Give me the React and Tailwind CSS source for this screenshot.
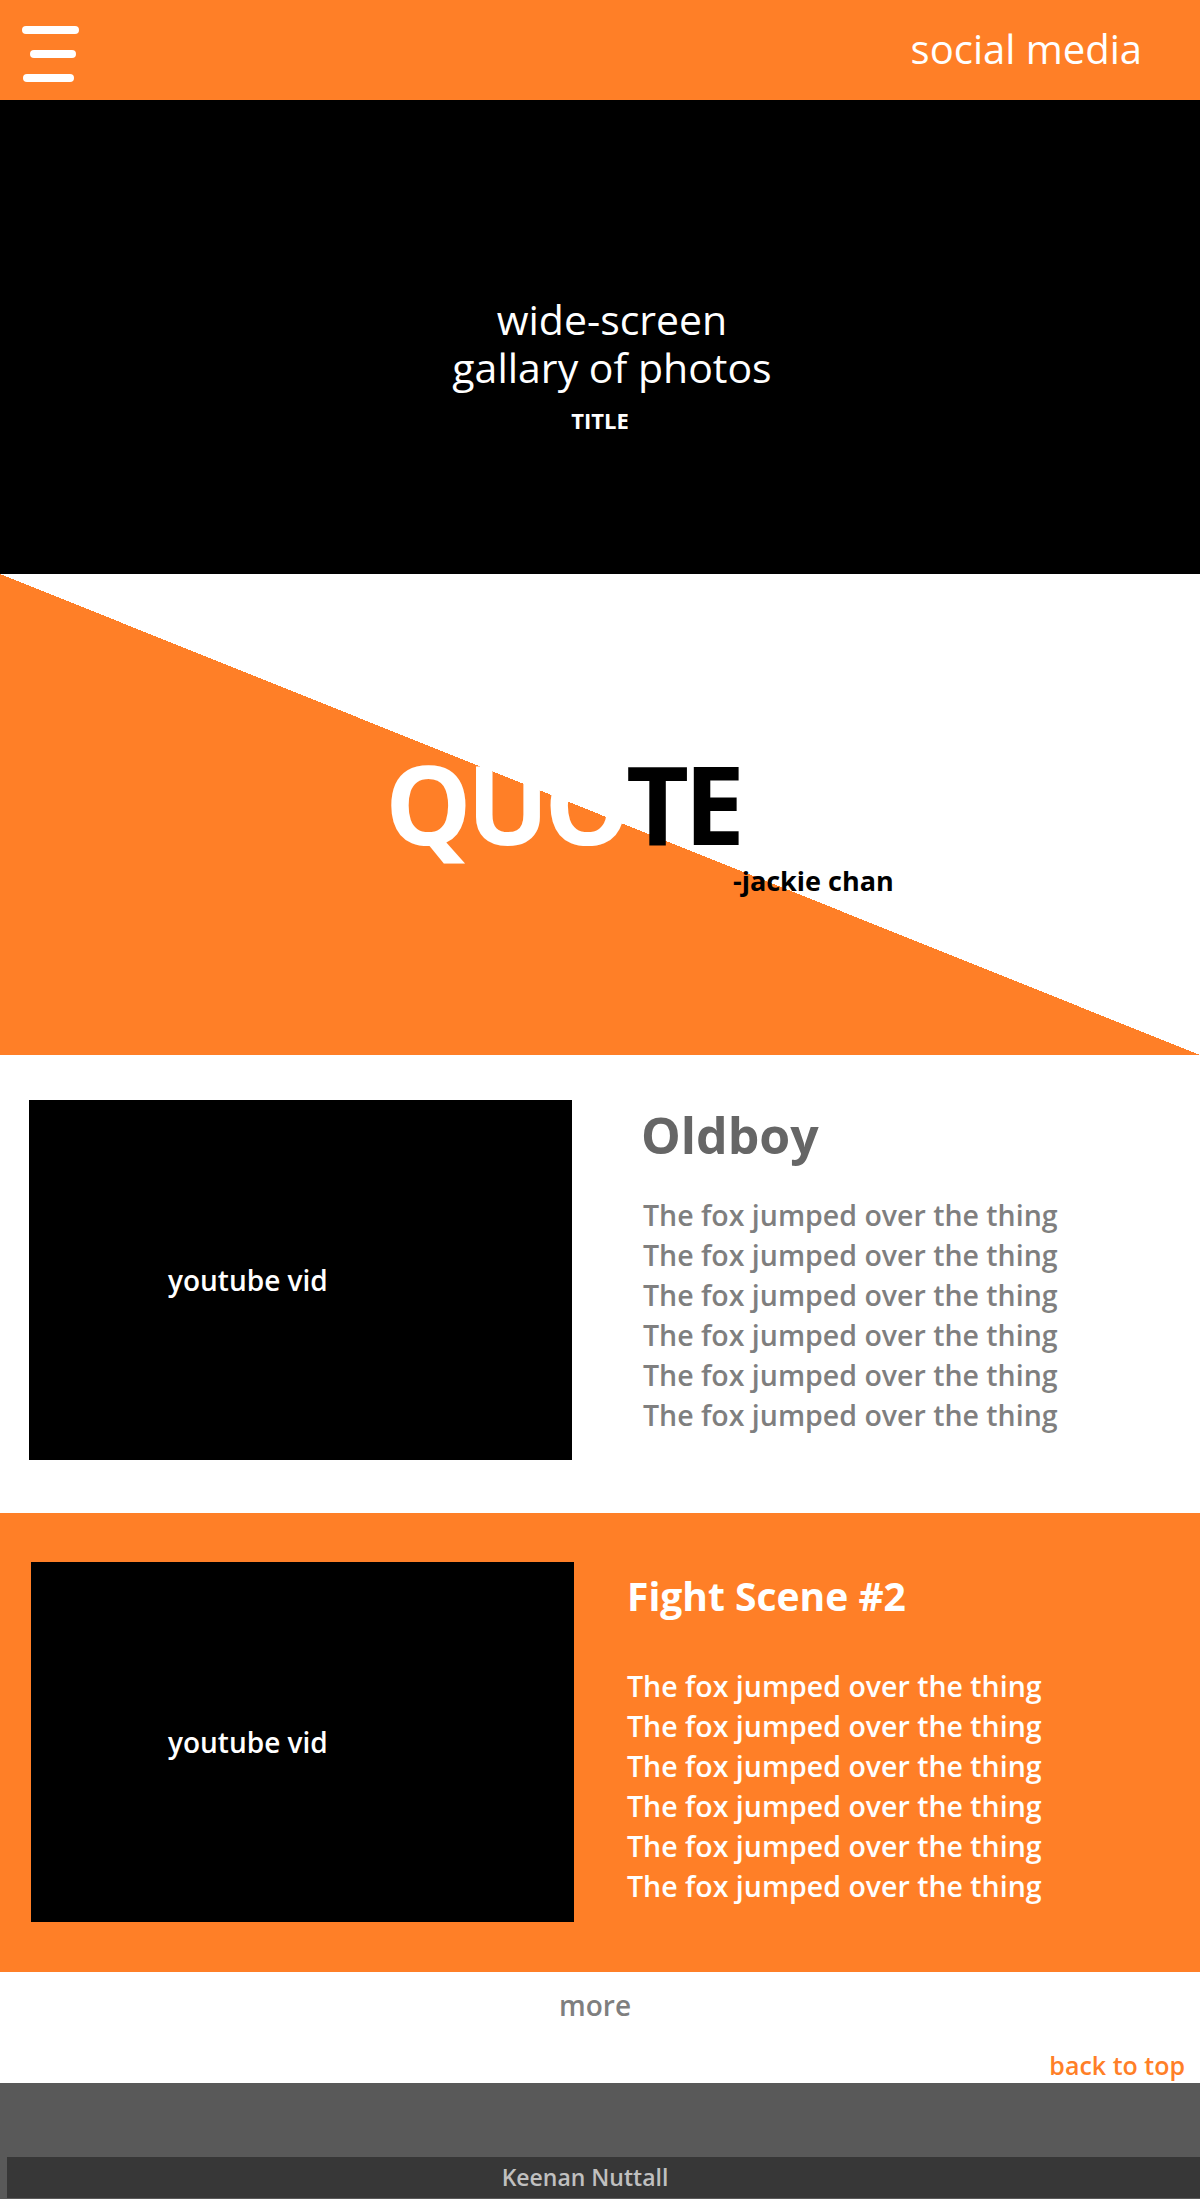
import React from "react";

const lines = Array.from({ length: 6 }, () => "The fox jumped over the thing");

const VideoBox = ({ pad }) => (
  <div className={`w-[543px] h-[360px] shrink-0 bg-black flex items-center ${pad}`}>
    <span className="text-white text-[28px] font-semibold leading-none">youtube vid</span>
  </div>
);

const App = () => {
  return (
    <div className="w-[1200px] font-['Open_Sans',sans-serif]">
      {/* header */}
      <header className="h-[100px] bg-[#ff7f27] flex items-start justify-between">
        <div className="flex flex-col items-start gap-[16px] pt-[26px] pl-[22px]">
          <span className="block w-[57px] h-[8px] rounded-full bg-white" />
          <span className="block w-[46px] h-[8px] rounded-full bg-white ml-[8px]" />
          <span className="block w-[51px] h-[8px] rounded-full bg-white ml-[1px]" />
        </div>
        <span className="mt-[29px] text-white text-[40px] leading-none pr-[58px]">
          social media
        </span>
      </header>

      {/* hero gallery */}
      <section className="h-[474px] bg-black flex flex-col items-center pt-[195px]">
        <p className="text-white text-[41px] leading-[48px] text-center pl-[24px]">
          wide-screen
          <br />
          gallary of photos
        </p>
        <p className="text-white text-[22px] font-bold leading-none mt-[18px]">TITLE</p>
      </section>

      {/* quote */}
      <section className="h-[481px] bg-[linear-gradient(to_top_right,#ff7f27_50%,#ffffff_50%)] pt-[174px] pl-[385px]">
        <p className="text-[109px] font-bold leading-none tracking-[-5px]">
          <span className="text-white">QUO</span>
          <span className="text-black">TE</span>
        </p>
        <p className="text-black text-[27px] font-bold leading-none mt-[10px] ml-[348px]">-jackie chan</p>
      </section>

      {/* oldboy */}
      <section className="h-[458px] bg-white flex items-start pt-[45px] pl-[29px]">
        <VideoBox pad="pl-[139px]" />
        <div className="ml-[69px] pt-[10px]">
          <h2 className="text-[#666666] text-[50px] font-bold leading-none">Oldboy</h2>
          <div className="mt-[35px] ml-[2px] text-[#7f7f7f] text-[28.5px] font-semibold leading-[40px]">
            {lines.map((l, i) => (
              <p key={i}>{l}</p>
            ))}
          </div>
        </div>
      </section>

      {/* fight scene */}
      <section className="h-[459px] bg-[#ff7f27] flex items-start pt-[49px] pl-[31px]">
        <VideoBox pad="pl-[137px]" />
        <div className="ml-[53px] pt-[14px]">
          <h2 className="text-white text-[39px] font-bold leading-none">Fight Scene #2</h2>
          <div className="mt-[51px] text-white text-[28.5px] font-semibold leading-[40px]">
            {lines.map((l, i) => (
              <p key={i}>{l}</p>
            ))}
          </div>
        </div>
      </section>

      {/* more + back to top */}
      <section className="h-[111px] bg-white flex flex-col pt-[19px]">
        <p className="text-center pr-[10px] text-[#7f7f7f] text-[28px] font-semibold leading-none">more</p>
        <p className="self-end pr-[15px] mt-[34px] text-[#ff7f27] text-[25px] font-semibold leading-none">
          back to top
        </p>
      </section>

      {/* footer */}
      <footer className="h-[116px] bg-[#595959] pt-[74px] pl-[7px] pb-[1px]">
        <div className="h-[41px] bg-[#373737] flex items-center justify-center pr-[37px]">
          <span className="text-[#c0c0c0] text-[23px] font-semibold leading-none">Keenan Nuttall</span>
        </div>
      </footer>
    </div>
  );
};

export default App;
